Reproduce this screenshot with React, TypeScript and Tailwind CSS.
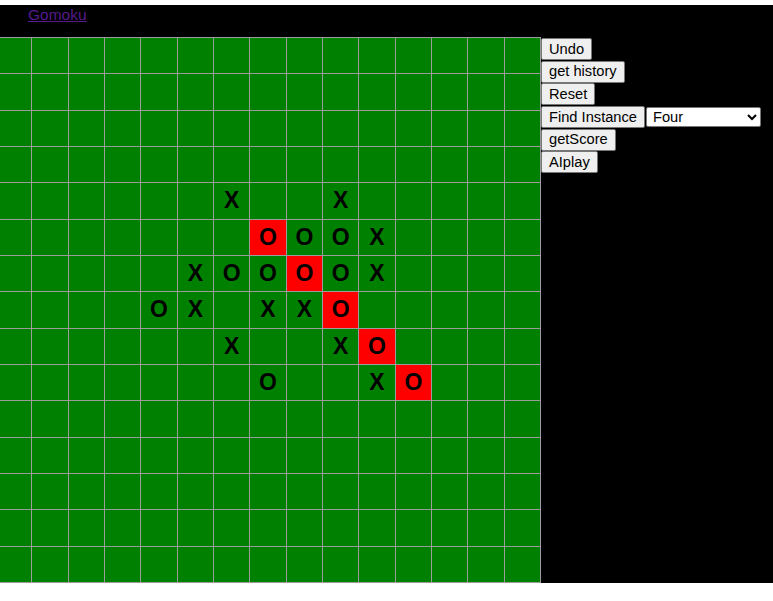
import { useState } from 'react';

const SIZE = 15;

// rows 4..9 hold the stones, everything else is empty
const START: Record<number, string> = {
  4: '......X..X.....',
  5: '.......OOOX....',
  6: '.....XOOOOX....',
  7: '....OX.XXO.....',
  8: '......X..XO....',
  9: '.......O..XO...',
};

const WIN = new Set(['5-7', '6-8', '7-9', '8-10', '9-11']);

function Board({ cells }: { cells: string[][] }) {
  return (
    <div className="-ml-[5px] grid h-[546px] w-[546px] shrink-0 grid-cols-[repeat(15,1fr)] grid-rows-[repeat(15,1fr)] border-l border-t border-[#9c9c9c]">
      {cells.map((row, r) =>
        row.map((c, i) => (
          <div
            key={`${r}-${i}`}
            className={`flex items-center justify-center border-b border-r border-[#9c9c9c] text-[23px] font-bold leading-none text-black ${
              WIN.has(`${r}-${i}`) ? 'bg-[#ff0000]' : 'bg-[#008000]'
            }`}
          >
            {c === '.' ? '' : c}
          </div>
        )),
      )}
    </div>
  );
}

function Btn({ children }: { children: React.ReactNode }) {
  return (
    <button className="h-[22px] rounded-[2px] border border-[#767676] bg-[#efefef] px-[7px] text-[14.67px] leading-[17px] text-black">
      {children}
    </button>
  );
}

export default function App() {
  const [cells] = useState(() =>
    Array.from({ length: SIZE }, (_, r) => (START[r] ?? '.'.repeat(SIZE)).split('')),
  );
  const [mode, setMode] = useState('Four');

  return (
    <div className="bg-white pt-[5px] font-['Liberation_Sans',Arial,sans-serif]">
      <div className="flex flex-col overflow-hidden bg-black">
        <div className="h-[32px] pl-[28px]">
          <a href="#" className="mt-[1px] block w-fit text-[15.5px] leading-[17px] text-[#551a8b] underline">
            Gomoku
          </a>
        </div>
        <div className="flex items-start">
          <Board cells={cells} />
          <div className="flex flex-col items-start gap-[0.7px] pt-[1px]">
            <Btn>Undo</Btn>
            <Btn>get history</Btn>
            <Btn>Reset</Btn>
            <div className="flex items-center">
              <Btn>Find Instance</Btn>
              <select
                value={mode}
                onChange={(e) => setMode(e.target.value)}
                className="ml-[1px] h-[20px] w-[115px] rounded-[2px] border border-[#767676] bg-white pl-[2px] text-[14.67px] leading-[17px] text-black"
              >
                <option>Four</option>
                <option>Three</option>
                <option>Five</option>
              </select>
            </div>
            <Btn>getScore</Btn>
            <Btn>AIplay</Btn>
          </div>
        </div>
      </div>
    </div>
  );
}
